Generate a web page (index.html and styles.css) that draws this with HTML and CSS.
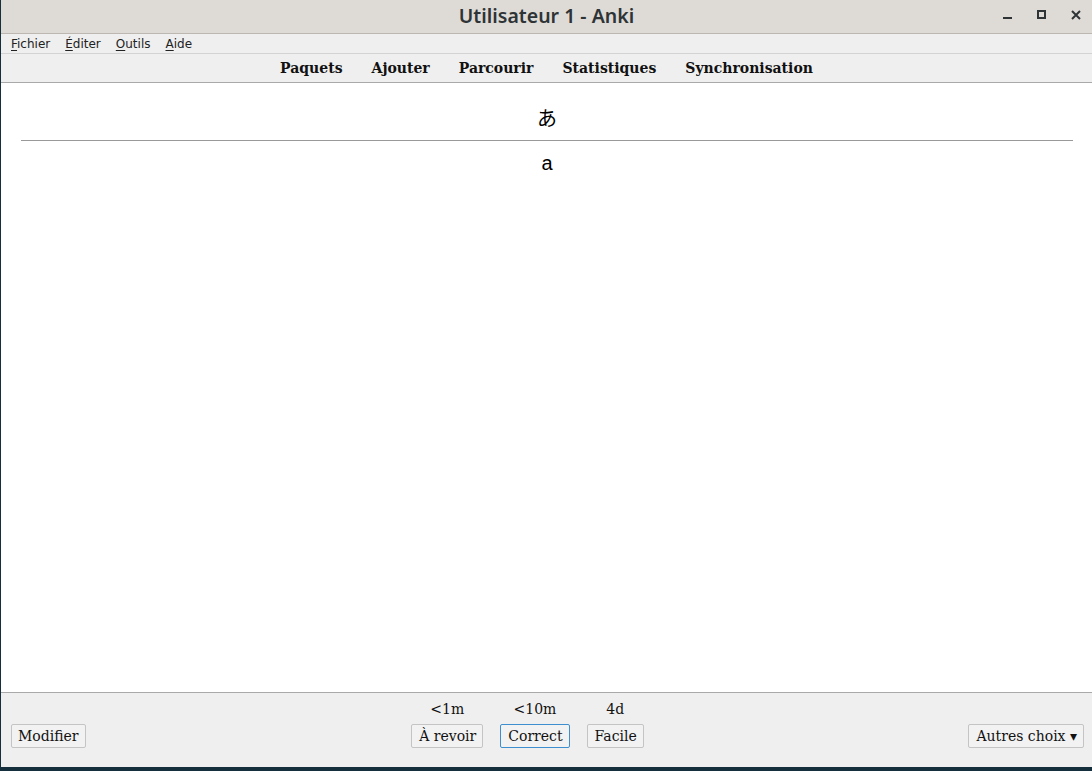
FILE: index.html
```html
<!DOCTYPE html>
<html lang="fr">
<head>
<meta charset="utf-8">
<title>Utilisateur 1 - Anki</title>
<link rel="stylesheet" href="styles.css">
</head>
<body>
<div class="window">
  <header class="titlebar">
    <div class="title">Utilisateur 1 - Anki</div>
    <div class="controls">
      <span class="ctl"><svg width="10" height="10" viewBox="0 0 10 10"><rect x="0" y="7" width="9" height="2" fill="#2e3436"/></svg></span>
      <span class="ctl"><svg width="10" height="10" viewBox="0 0 10 10"><rect x="1" y="1" width="7" height="7" fill="none" stroke="#2e3436" stroke-width="2"/></svg></span>
      <span class="ctl"><svg width="10" height="10" viewBox="0 0 10 10"><path d="M1 1 L9 9 M9 1 L1 9" stroke="#2e3436" stroke-width="2"/></svg></span>
    </div>
  </header>
  <nav class="menubar">
    <span class="menu"><u>F</u>ichier</span>
    <span class="menu"><u>É</u>diter</span>
    <span class="menu"><u>O</u>utils</span>
    <span class="menu"><u>A</u>ide</span>
  </nav>
  <div class="toolbar">
    <span class="tb">Paquets</span>
    <span class="tb">Ajouter</span>
    <span class="tb">Parcourir</span>
    <span class="tb">Statistiques</span>
    <span class="tb">Synchronisation</span>
  </div>
  <main class="card">
    <div class="front">あ</div>
    <hr class="answer">
    <div class="back">a</div>
  </main>
  <footer class="bottombar">
    <div class="left"><button class="btn">Modifier</button></div>
    <div class="middle">
      <div class="ease">
        <span class="due">&lt;1m</span>
        <button class="btn wide">À revoir</button>
      </div>
      <div class="ease">
        <span class="due">&lt;10m</span>
        <button class="btn wide focus">Correct</button>
      </div>
      <div class="ease">
        <span class="due">4d</span>
        <button class="btn wide">Facile</button>
      </div>
    </div>
    <div class="right"><button class="btn wide">Autres choix ▾</button></div>
  </footer>
</div>
</body>
</html>
```
FILE: styles.css
```css
html, body {
  margin: 0;
  padding: 0;
  width: 1092px;
  height: 771px;
  overflow: hidden;
  background: #15303c;
}
.window {
  width: 1091px;
  height: 767px;
  margin-left: 1px;
  background: #efefef;
  display: flex;
  flex-direction: column;
}
.titlebar {
  height: 33px;
  border-bottom: 1px solid #bcb7b1;
  background: #dedbd7;
  position: relative;
  display: flex;
  align-items: center;
  justify-content: center;
  flex: none;
}
.title {
  font-family: "Noto Sans", "DejaVu Sans", sans-serif;
  font-weight: 600;
  font-size: 19.5px;
  color: #2e3436;
  margin-top: -2px;
}
.controls {
  position: absolute;
  right: 11px;
  top: 10px;
  display: flex;
  gap: 24px;
}
.ctl {
  width: 10px;
  height: 10px;
  display: block;
}
.ctl svg { display: block; }
.menubar {
  height: 19px;
  border-bottom: 1px solid #d3d3d3;
  display: flex;
  align-items: center;
  padding-left: 10px;
  gap: 15px;
  font-family: "DejaVu Sans", sans-serif;
  font-size: 12px;
  color: #222;
  flex: none;
}
.menu u { text-decoration-thickness: 1px; text-underline-offset: 2px; }
.toolbar {
  height: 28px;
  border-bottom: 1px solid #a9a9a9;
  display: flex;
  justify-content: center;
  align-items: center;
  gap: 29px;
  font-family: "DejaVu Serif", serif;
  font-weight: bold;
  font-size: 14px;
  color: #111;
  flex: none;
  padding-left: 0;
}
.card {
  flex: 1;
  background: #fff;
  border-bottom: 1px solid #a9a9a9;
  padding: 22px 19px 0 20px;
  text-align: center;
  color: #000;
}
.front {
  font-family: "Liberation Sans", "Noto Sans CJK JP", sans-serif;
  font-size: 20px;
  line-height: 28px;
}
.answer {
  border: none;
  border-top: 1px solid #999;
  margin: 7px 0 0 0;
  height: 0;
}
.back {
  font-family: "Liberation Sans", Arial, sans-serif;
  font-size: 20px;
  line-height: 28px;
  margin-top: 8px;
}
.bottombar {
  height: 74px;
  flex: none;
  display: flex;
  align-items: flex-end;
  padding: 0 8px 19px 10px;
  box-sizing: border-box;
  font-family: "DejaVu Serif", serif;
  font-size: 14px;
  color: #111;
}
.left, .right { flex: 1; display: flex; }
.right { justify-content: flex-end; }
.middle {
  display: flex;
  gap: 17px;
  align-items: flex-end;
  margin-right: 40px;
}
.ease {
  display: flex;
  flex-direction: column;
  align-items: center;
  gap: 7px;
}
.due { line-height: 16px; }
.btn {
  font-family: "DejaVu Serif", serif;
  font-size: 14px;
  color: #111;
  background: #f2f2f2;
  border: 1px solid #c4c4c4;
  border-radius: 2px;
  height: 24px;
  padding: 0 6px;
  margin: 0;
  line-height: 20px;
}
.btn.wide {
  padding: 0 6px 0 7px;
}
.btn.focus {
  border-color: #3d8fd0;
}
```
